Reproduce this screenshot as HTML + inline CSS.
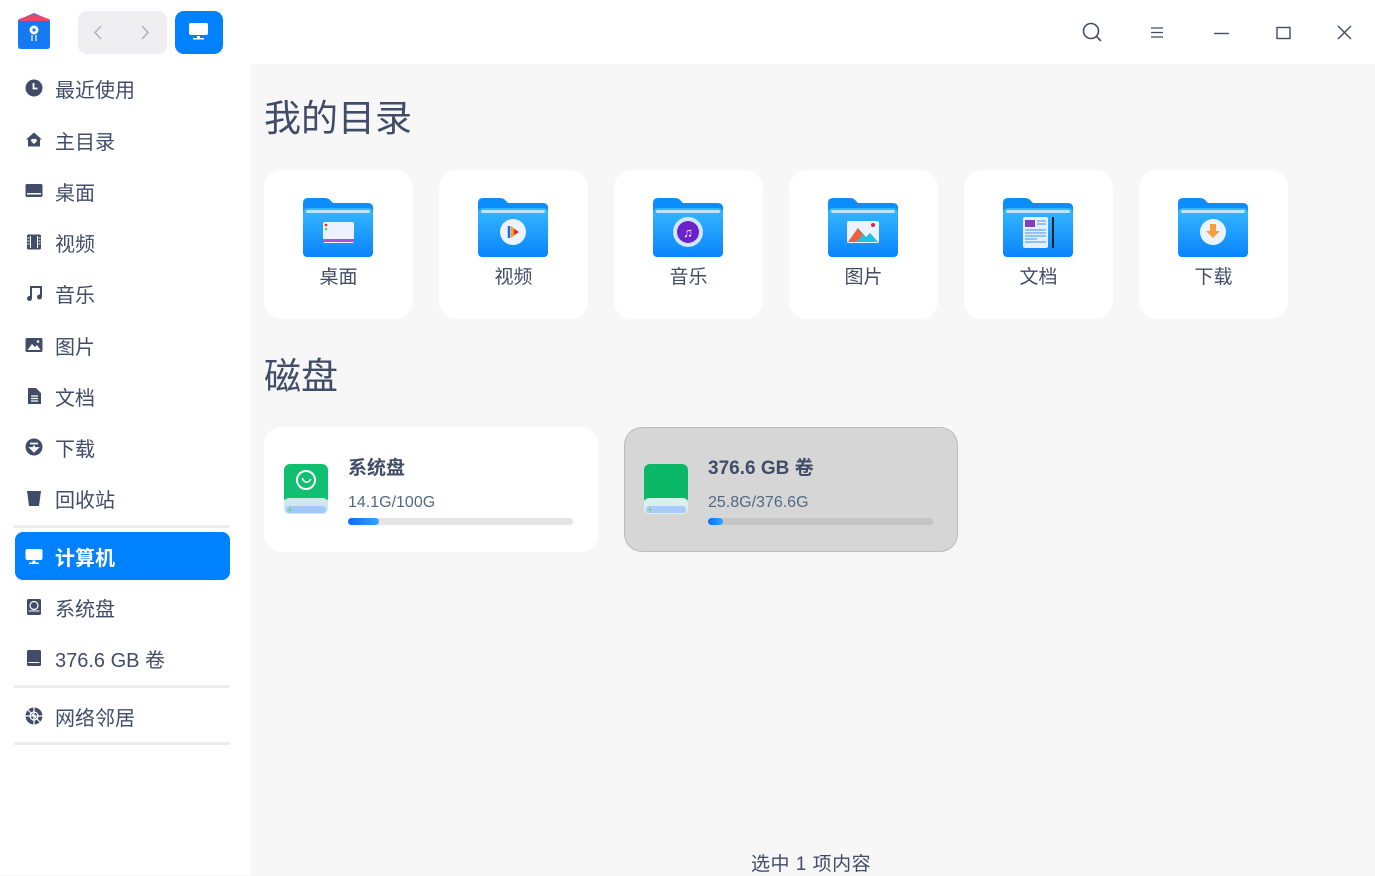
<!DOCTYPE html>
<html><head><meta charset="utf-8"><style>
*{margin:0;padding:0;box-sizing:border-box}
body{width:1375px;height:875px;overflow:hidden;background:#f7f7f7;font-family:"Liberation Sans","Noto Sans CJK SC",sans-serif;color:#414d68;position:relative}
.top{position:absolute;left:0;top:0;width:1375px;height:64px;background:#fff}
.side{position:absolute;left:0;top:64px;width:251px;height:811px;background:#fff}
.abs{position:absolute}
.it{position:absolute;left:15px;width:215px;height:48px;display:flex;align-items:center;font-size:20px}
.it svg{position:absolute;left:10px}
.it span{position:absolute;left:40px}
.sep{position:absolute;left:14px;width:216px;height:3px;background:#ececec}
.sel{background:#0081ff;color:#fff;border-radius:8px;font-weight:bold}
.card{position:absolute;top:170px;width:149px;height:149px;background:#fff;border-radius:18px}
.card svg{position:absolute;left:39px;top:27px}
.card div{position:absolute;top:92px;width:100%;text-align:center;font-size:19px}
h1{position:absolute;left:264px;font-size:37px;font-weight:normal;color:#414d68}
.disk{position:absolute;top:427px;width:334px;height:125px;background:#fff;border-radius:18px}
.disk .n{position:absolute;left:84px;top:26px;font-size:19px;font-weight:bold}
.disk .s{position:absolute;left:84px;top:67px;font-size:16px;color:#526a7f}
.bar{position:absolute;left:84px;top:91px;width:225px;height:7px;border-radius:4px;background:#e4e4e4}
.bar i{position:absolute;left:0;top:0;height:7px;border-radius:4px;background:linear-gradient(90deg,#0a6cff,#38a3ff)}
</style></head><body>
<div class="top"></div>
<div class="side"></div>
<svg class="abs" style="left:16px;top:12px" width="36" height="38" viewBox="0 0 36 38">
<path d="M2 8 L18 1 L34 8 L34 34 Q34 37 31 37 L5 37 Q2 37 2 34Z" fill="#1a7cf5"/>
<path d="M3 7 L18 2 L33 7 L33 9 L3 9Z" fill="#e8476a"/>
<rect x="3" y="9" width="30" height="27" rx="3" fill="#1479f3"/>
<circle cx="18" cy="18" r="4.5" fill="#fff"/><circle cx="18" cy="18" r="1.6" fill="#1479f3"/>
<path d="M16 23v6M20 23v6" stroke="#fff" stroke-width="1.2"/></svg>
<div class="abs" style="left:78px;top:11px;width:89px;height:43px;background:#efeff1;border-radius:9px"></div>
<svg class="abs" style="left:78px;top:11px" width="89" height="43"><path d="M23 15 L17 21.5 L23 28" stroke="#b0b4bc" stroke-width="1.6" fill="none"/><path d="M64 15 L70 21.5 L64 28" stroke="#b0b4bc" stroke-width="1.6" fill="none"/></svg>
<div class="abs" style="left:175px;top:11px;width:48px;height:43px;background:#0081ff;border-radius:9px"></div>
<svg class="abs" style="left:189px;top:23px" width="20" height="18"><rect x="0" y="0" width="19" height="12" rx="2" fill="#fff"/><rect x="8" y="13" width="3" height="2" fill="#fff"/><rect x="4" y="15" width="11" height="1.5" fill="#fff"/></svg>
<svg class="abs" style="left:1070px;top:15px" width="290" height="35" stroke="#414d68" stroke-width="1.6" fill="none">
<circle cx="21" cy="16" r="7.5"/><path d="M26.5 21.5 L31 26"/>
<path d="M81 13h12M81 17.5h12M81 22h12" stroke-width="1.3"/>
<path d="M144 18.5h15" stroke-width="1.4"/>
<rect x="207" y="12.5" width="13" height="11" stroke-width="1.4"/>
<path d="M268 11 L281 24 M281 11 L268 24" stroke-width="1.4"/>
</svg>
<div class="it" style="top:64px"><svg width="18" height="18"><circle cx="9" cy="9" r="8.5" fill="#414d68"/><path d="M8.5 4v5.5h4" stroke="#fff" stroke-width="1.8" fill="none"/></svg><span>最近使用</span></div>
<div class="it" style="top:116px"><svg width="18" height="18"><path d="M9 1.5 L17 8.5 L15 8.5 L15 15.5 L3 15.5 L3 8.5 L1 8.5Z" fill="#414d68"/><path d="M9 13 L6.5 10.5 a1.5 1.5 0 0 1 2.5-2 a1.5 1.5 0 0 1 2.5 2Z" fill="#fff"/></svg><span>主目录</span></div>
<div class="it" style="top:167px"><svg width="18" height="18"><rect x="0.5" y="2" width="17" height="13" rx="1.5" fill="#414d68"/><rect x="2" y="11" width="14" height="1.5" fill="#fff"/></svg><span>桌面</span></div>
<div class="it" style="top:218px"><svg width="18" height="18"><rect x="2" y="1.5" width="14" height="15" rx="1.5" fill="#414d68"/><path d="M5.5 3v12M12.5 3v12" stroke="#fff" stroke-width="1"/><path d="M2.5 5h2M2.5 8h2M2.5 11h2M13.5 5h2M13.5 8h2M13.5 11h2" stroke="#fff" stroke-width="1"/></svg><span>视频</span></div>
<div class="it" style="top:269px"><svg width="18" height="18"><path d="M6 14V3h10v10" stroke="#414d68" stroke-width="2" fill="none"/><circle cx="4.5" cy="14.5" r="2.5" fill="#414d68"/><circle cx="14.5" cy="13" r="2.5" fill="#414d68"/></svg><span>音乐</span></div>
<div class="it" style="top:321px"><svg width="18" height="18"><rect x="0.5" y="2" width="17" height="14" rx="1.5" fill="#414d68"/><path d="M2.5 14 L7 8 L10 11 L12 9 L15.5 14Z" fill="#fff"/><circle cx="13" cy="5.5" r="1.3" fill="#fff"/></svg><span>图片</span></div>
<div class="it" style="top:372px"><svg width="18" height="18"><path d="M3 1h8l5 5v11H3Z" fill="#414d68"/><path d="M6 9h7M6 11.5h7M6 14h7" stroke="#fff" stroke-width="1.2"/></svg><span>文档</span></div>
<div class="it" style="top:423px"><svg width="18" height="18"><circle cx="9" cy="9" r="8.5" fill="#414d68"/><path d="M5 5.5h8M9 7.5v3M5.5 10 L9 13.5 L12.5 10Z" stroke="#fff" stroke-width="1.8" fill="#fff"/></svg><span>下载</span></div>
<div class="it" style="top:474px"><svg width="18" height="18"><path d="M2 2h14l-2 15H4Z" fill="#414d68"/></svg><span>回收站</span></div>
<div class="sep" style="top:525px"></div>
<div class="it sel" style="top:532px"><svg width="18" height="18"><rect x="0.5" y="2" width="17" height="11" rx="2" fill="#fff"/><rect x="7.5" y="13.5" width="3" height="2" fill="#fff"/><rect x="4" y="15.5" width="10" height="1.5" fill="#fff"/></svg><span>计算机</span></div>
<div class="it" style="top:583px"><svg width="18" height="18"><rect x="2" y="1" width="14" height="16" rx="1.5" fill="#414d68"/><circle cx="9" cy="7.5" r="4" fill="none" stroke="#fff" stroke-width="1.2"/><path d="M3.5 13h11" stroke="#fff" stroke-width="1"/></svg><span>系统盘</span></div>
<div class="it" style="top:634px"><svg width="18" height="18"><rect x="2" y="1" width="14" height="16" rx="1.5" fill="#414d68"/><path d="M3.5 13.5h11" stroke="#fff" stroke-width="1"/></svg><span>376.6 GB 卷</span></div>
<div class="sep" style="top:685px"></div>
<div class="it" style="top:692px"><svg width="18" height="18"><circle cx="9" cy="9" r="8.5" fill="#414d68"/><path d="M9 .5v17M.5 9h17M3 3l12 12" stroke="#fff" stroke-width="1.2"/><circle cx="9" cy="9" r="4" fill="none" stroke="#fff" stroke-width="1.2"/></svg><span>网络邻居</span></div>
<div class="sep" style="top:742px"></div>
<h1 style="top:88px">我的目录</h1>
<svg width="0" height="0" style="position:absolute"><defs>
<linearGradient id="fg" x1="0" y1="0" x2="0" y2="1"><stop offset="0" stop-color="#35b8ff"/><stop offset="1" stop-color="#0a84fb"/></linearGradient>
<symbol id="fold" viewBox="0 0 70 62"><path d="M0 6 Q0 1 5 1 L22 1 Q26 1 28 4 L30 6 L65 6 Q70 6 70 11 L70 55 Q70 60 65 60 L5 60 Q0 60 0 55Z" fill="#0d8cfb"/><path d="M0 16 Q0 11 5 11 L65 11 Q70 11 70 16 L70 55 Q70 60 65 60 L5 60 Q0 60 0 55Z" fill="url(#fg)"/><rect x="3" y="13" width="64" height="3" rx="1.5" fill="#bfe6ff"/></symbol>
</defs></svg>
<div class="card" style="left:264px"><svg width="70" height="62"><use href="#fold"/><rect x="20" y="25" width="31" height="21" rx="2" fill="#eaf3ff"/><rect x="20" y="42" width="31" height="3" fill="#b050e0"/><circle cx="23" cy="28" r="1.3" fill="#e23"/><circle cx="23" cy="32" r="1.3" fill="#7c3"/></svg><div>桌面</div></div>
<div class="card" style="left:439px"><svg width="70" height="62"><use href="#fold"/><circle cx="35" cy="35" r="13" fill="#eaf3ff"/><path d="M31 29v12" stroke="#2266dd" stroke-width="2.5"/><path d="M33 29 L41 35 L33 41Z" fill="#f5a000"/><path d="M36 32 L41 35 L36 38Z" fill="#e8205f"/></svg><div>视频</div></div>
<div class="card" style="left:614px"><svg width="70" height="62"><use href="#fold"/><circle cx="35" cy="35" r="15" fill="#cfe6ff"/><circle cx="35" cy="35" r="11" fill="#6a22cc"/><text x="35" y="40" font-size="13" fill="#fff" text-anchor="middle">♫</text></svg><div>音乐</div></div>
<div class="card" style="left:789px"><svg width="70" height="62"><use href="#fold"/><rect x="19" y="24" width="32" height="22" rx="2" fill="#eaf3ff"/><path d="M20 45 L30 31 L38 40 L42 36 L50 45Z" fill="#22c0e0"/><path d="M20 45 L30 31 L35 38 L28 45Z" fill="#f06040"/><circle cx="45" cy="28" r="2" fill="#e23"/></svg><div>图片</div></div>
<div class="card" style="left:964px"><svg width="70" height="62"><use href="#fold"/><rect x="20" y="20" width="25" height="31" rx="2" fill="#e4f0ff"/><rect x="22" y="23" width="10" height="7" fill="#8040c0"/><path d="M34 24h9M34 27h9M22 33h21M22 36h21M22 39h21M22 42h12M22 45h21" stroke="#5aa8f0" stroke-width="1.3"/><path d="M50 20v31" stroke="#222" stroke-width="2"/></svg><div>文档</div></div>
<div class="card" style="left:1139px"><svg width="70" height="62"><use href="#fold"/><circle cx="35" cy="35" r="13" fill="#eaf3ff"/><path d="M32 27h6v7h4l-7 7 -7-7h4Z" fill="#f5a040"/></svg><div>下载</div></div>
<h1 style="top:346px">磁盘</h1>
<div class="disk" style="left:264px">
<svg class="abs" style="left:20px;top:37px" width="44" height="52"><rect x="0" y="0" width="44" height="40" rx="6" fill="#10c070"/><rect x="0" y="34" width="44" height="16" rx="5" fill="#cfe8f0"/><rect x="2" y="42" width="40" height="7" rx="3" fill="#a0c8ff"/><circle cx="6" cy="45.5" r="1.3" fill="#6d3"/><circle cx="22" cy="16" r="9" fill="none" stroke="#fff" stroke-width="2"/><path d="M18 14 Q22 22 27 15" stroke="#fff" stroke-width="1.5" fill="none"/></svg>
<div class="n">系统盘</div><div class="s">14.1G/100G</div><div class="bar"><i style="width:31px"></i></div></div>
<div class="disk" style="left:624px;background:#d6d6d6;border:1px solid #bcbcbc">
<svg class="abs" style="left:19px;top:36px" width="44" height="52"><rect x="0" y="0" width="44" height="40" rx="6" fill="#0ab868"/><rect x="0" y="34" width="44" height="16" rx="5" fill="#d8f0ee"/><rect x="2" y="42" width="40" height="7" rx="3" fill="#a8ccff"/><circle cx="6" cy="45.5" r="1.3" fill="#6d3"/></svg>
<div class="n" style="left:83px;top:25px">376.6 GB 卷</div><div class="s" style="left:83px;top:66px">25.8G/376.6G</div><div class="bar" style="left:83px;top:90px;background:#c4c4c4"><i style="width:15px"></i></div></div>
<div class="abs" style="left:751px;top:849px;font-size:19px;letter-spacing:0.5px">选中 1 项内容</div>
</body></html>
